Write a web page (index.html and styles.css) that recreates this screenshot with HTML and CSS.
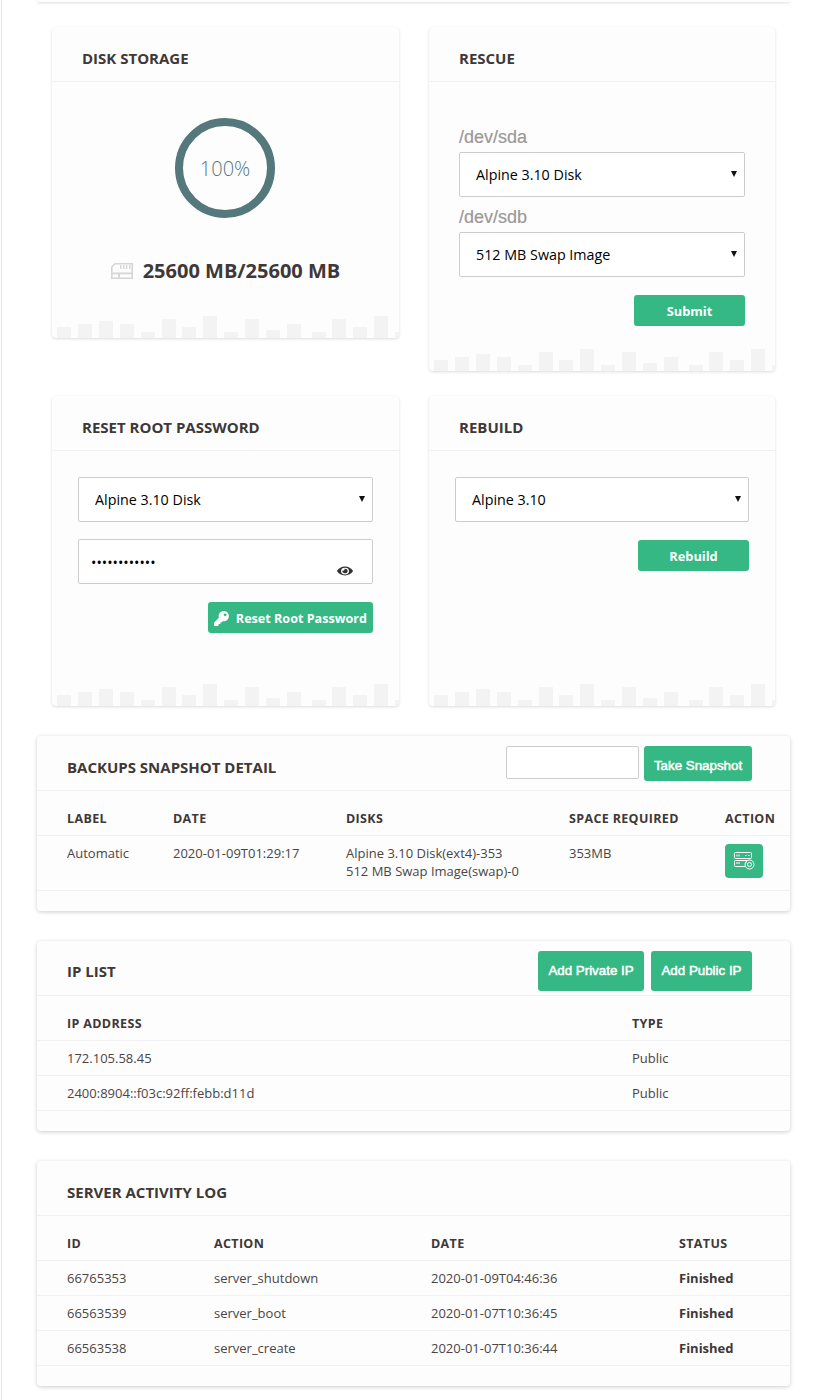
FILE: index.html
```html
<!DOCTYPE html>
<html lang="en">
<head>
    <meta charset="UTF-8">
    <meta name="viewport" content="width=device-width, initial-scale=1.0">
    <title>Server detail</title>
    <link rel="stylesheet" href="styles.css">
</head>
<body>
    <svg class="sprite" width="0" height="0" aria-hidden="true">
        <symbol id="bars" viewBox="0 0 347 22">
            <rect x="5" y="11" width="14" height="11"/>
            <rect x="26" y="8" width="14" height="14"/>
            <rect x="47" y="5" width="14" height="17"/>
            <rect x="68" y="8" width="14" height="14"/>
            <rect x="89" y="16" width="14" height="6"/>
            <rect x="110" y="3" width="14" height="19"/>
            <rect x="130" y="11" width="14" height="11"/>
            <rect x="151" y="0" width="14" height="22"/>
            <rect x="172" y="16" width="14" height="6"/>
            <rect x="193" y="3" width="14" height="19"/>
            <rect x="214" y="14" width="14" height="8"/>
            <rect x="235" y="8" width="14" height="14"/>
            <rect x="260" y="16" width="14" height="6"/>
            <rect x="280" y="3" width="14" height="19"/>
            <rect x="301" y="11" width="14" height="11"/>
            <rect x="322" y="0" width="14" height="22"/>
            <rect x="343" y="16" width="14" height="6"/>
        </symbol>
    </svg>

    <div class="page">
        <div class="card-stub"></div>

        <div class="panel-grid">
            <div class="card panel panel-disk">
                <div class="card-header"><h2>Disk Storage</h2></div>
                <div class="disk-body">
                    <div class="ring">100%</div>
                    <div class="disk-usage">
                        <svg class="ram-icon" width="22" height="16" viewBox="0 0 22 16">
                            <path d="M4 .8h17.2v14.4H.8V4z" fill="none" stroke="#d6d6d6" stroke-width="1.6"/>
                            <path d="M1 9.5h20v1.8H9v3.5H7v-3.5H1z" fill="#d6d6d6"/>
                            <path d="M9 2h1.4v4H9zM12 2h1.4v4H12zM15 2h1.4v4H15zM18 2h1.4v4H18z" fill="#d6d6d6"/>
                        </svg>
                        <span>25600 MB/25600 MB</span>
                    </div>
                </div>
                <svg class="bars"><use href="#bars"/></svg>
            </div>

            <div class="card panel panel-rescue">
                <div class="card-header"><h2>Rescue</h2></div>
                <form class="rescue-form">
                    <label class="dev-label">/dev/sda</label>
                    <select class="field"><option>Alpine 3.10 Disk</option></select>
                    <label class="dev-label">/dev/sdb</label>
                    <select class="field"><option>512 MB Swap Image</option></select>
                    <div class="form-actions">
                        <button type="button" class="btn btn-wide">Submit</button>
                    </div>
                </form>
                <svg class="bars"><use href="#bars"/></svg>
            </div>

            <div class="card panel panel-tall">
                <div class="card-header"><h2>Reset Root Password</h2></div>
                <form class="stack-form">
                    <select class="field"><option>Alpine 3.10 Disk</option></select>
                    <div class="password-wrap">
                        <input class="field" type="password" value="abcdefghijkl">
                        <svg class="eye-icon" width="16" height="12" viewBox="0 0 576 512" preserveAspectRatio="none">
                            <path d="M572.52 241.4C518.29 135.59 410.93 64 288 64S57.68 135.64 3.48 241.41a32.35 32.35 0 0 0 0 29.19C57.71 376.41 165.07 448 288 448s230.32-71.64 284.52-177.41a32.35 32.35 0 0 0 0-29.19zM288 400a144 144 0 1 1 144-144 143.93 143.93 0 0 1-144 144zm0-240a95.31 95.31 0 0 0-25.31 3.79 47.85 47.85 0 0 1-66.9 66.9A95.78 95.78 0 1 0 288 160z"/>
                        </svg>
                    </div>
                    <div class="form-actions">
                        <button type="button" class="btn btn-icon">
                            <svg width="15" height="15" viewBox="0 0 512 512">
                                <path d="M512 176.001C512 273.203 433.202 352 336 352c-11.22 0-22.19-1.062-32.827-3.069l-24.012 27.014A23.999 23.999 0 0 1 261.223 384H224v40c0 13.255-10.745 24-24 24h-40v40c0 13.255-10.745 24-24 24H24c-13.255 0-24-10.745-24-24v-78.059c0-6.365 2.529-12.47 7.029-16.971l161.802-161.802C163.108 213.814 160 195.271 160 176 160 78.798 238.797.001 335.999 0 433.488-.001 512 78.511 512 176.001zM336 128c0 26.51 21.49 48 48 48s48-21.49 48-48-21.49-48-48-48-48 21.49-48 48z"/>
                            </svg>
                            Reset Root Password
                        </button>
                    </div>
                </form>
                <svg class="bars"><use href="#bars"/></svg>
            </div>

            <div class="card panel panel-tall">
                <div class="card-header"><h2>Rebuild</h2></div>
                <form class="stack-form">
                    <select class="field"><option>Alpine 3.10</option></select>
                    <div class="form-actions">
                        <button type="button" class="btn btn-wide">Rebuild</button>
                    </div>
                </form>
                <svg class="bars"><use href="#bars"/></svg>
            </div>
        </div>

        <div class="card table-card">
            <div class="card-header header-tools">
                <h2>Backups Snapshot Detail</h2>
                <div class="tools">
                    <input class="snapshot-input" type="text">
                    <button type="button" class="btn-plain btn-snapshot">Take Snapshot</button>
                </div>
            </div>
            <table class="data-table backups-table">
                <thead>
                    <tr><th>Label</th><th>Date</th><th>Disks</th><th>Space Required</th><th>Action</th></tr>
                </thead>
                <tbody>
                    <tr>
                        <td>Automatic</td>
                        <td>2020-01-09T01:29:17</td>
                        <td>Alpine 3.10 Disk(ext4)-353<br>512 MB Swap Image(swap)-0</td>
                        <td>353MB</td>
                        <td>
                            <button type="button" class="btn-restore" aria-label="Restore">
                                <svg width="21" height="18" viewBox="0 0 21 18" fill="none" stroke="#fff" stroke-width="1">
                                    <rect x=".5" y=".5" width="17" height="6" rx="1"/>
                                    <path d="M11 14.5H1.5a1 1 0 0 1-1-1v-4a1 1 0 0 1 1-1H14"/>
                                    <path d="M3 2.5v2M5 2.5v2M3 10v2M5 10v2M11 3.5h1.5M14 3.5h1.5M11 10.5h1.5"/>
                                    <circle cx="15.5" cy="12.5" r="4.5"/>
                                    <circle cx="15.5" cy="12.5" r="2"/>
                                </svg>
                            </button>
                        </td>
                    </tr>
                </tbody>
            </table>
        </div>

        <div class="card table-card">
            <div class="card-header header-tools">
                <h2>IP List</h2>
                <div class="tools">
                    <button type="button" class="btn-plain btn-ip btn-private">Add Private IP</button>
                    <button type="button" class="btn-plain btn-ip btn-public">Add Public IP</button>
                </div>
            </div>
            <table class="data-table ip-table">
                <thead>
                    <tr><th>IP Address</th><th>Type</th></tr>
                </thead>
                <tbody>
                    <tr><td>172.105.58.45</td><td>Public</td></tr>
                    <tr><td>2400:8904::f03c:92ff:febb:d11d</td><td>Public</td></tr>
                </tbody>
            </table>
        </div>

        <div class="card table-card">
            <div class="card-header"><h2>Server Activity Log</h2></div>
            <table class="data-table log-table">
                <thead>
                    <tr><th>ID</th><th>Action</th><th>Date</th><th>Status</th></tr>
                </thead>
                <tbody>
                    <tr><td>66765353</td><td>server_shutdown</td><td>2020-01-09T04:46:36</td><td class="status">Finished</td></tr>
                    <tr><td>66563539</td><td>server_boot</td><td>2020-01-07T10:36:45</td><td class="status">Finished</td></tr>
                    <tr><td>66563538</td><td>server_create</td><td>2020-01-07T10:36:44</td><td class="status">Finished</td></tr>
                </tbody>
            </table>
        </div>
    </div>
</body>
</html>
```

FILE: styles.css
```css
* { box-sizing: border-box; }

body {
    margin: 0;
    background: #fff;
    color: #3e3838;
    font-family: "Open Sans", sans-serif;
    font-size: 13px;
}

.sprite {
    position: absolute;
}

.page {
    width: 823px;
    height: 1400px;
    margin-left: 1px;
    padding: 0 34px 0 35px;
    border-left: 1px solid #e3e5ea;
    overflow: hidden;
}

.card-stub {
    height: 2px;
    background: #fdfdfd;
    border-radius: 0 0 4px 4px;
    box-shadow: 0 1px 3px rgba(0,0,0,0.16);
}

.card {
    position: relative;
    background: #fdfdfd;
    border-radius: 4px;
    box-shadow: 0 1px 3px rgba(0,0,0,0.14);
}

.card-header {
    height: 55px;
    padding: 0 30px;
    display: flex;
    align-items: center;
    border-bottom: 1px solid #f1f1f3;
}

.card-header h2 {
    margin: 0;
    padding-top: 7px;
    font-size: 15px;
    font-weight: 700;
    text-transform: uppercase;
    color: #3e3838;
}

.panel-grid {
    display: grid;
    grid-template-columns: 347px 346px;
    column-gap: 30px;
    row-gap: 25px;
    align-items: start;
    margin: 25px 15px 30px;
}

.panel {
    overflow: hidden;
}

.panel-disk { height: 311px; }
.panel-rescue { height: 344px; }
.panel-tall { height: 310px; }

.bars {
    position: absolute;
    left: 0;
    bottom: 0;
    width: 347px;
    height: 22px;
    fill: #f3f3f3;
}

/* disk */
.disk-body {
    display: flex;
    flex-direction: column;
    align-items: center;
    padding-top: 36px;
}

.ring {
    width: 100px;
    height: 100px;
    margin-right: 1px;
    border: 8px solid #54787c;
    border-radius: 50%;
    display: flex;
    align-items: center;
    justify-content: center;
    font-size: 20px;
    font-weight: 300;
    color: #55787e;
}

.disk-usage {
    display: flex;
    align-items: center;
    gap: 10px;
    margin-top: 39px;
    font-size: 20px;
    font-weight: 700;
    color: #3e3838;
}

/* forms */
.field {
    display: block;
    width: 100%;
    height: 45px;
    padding: 1px 12px 0;
    background: #fff;
    border: 1px solid #ccc;
    border-radius: 2px;
    font-family: "Open Sans", sans-serif;
    font-size: 14.3px;
    color: #000;
}

select.field {
    appearance: none;
    padding-top: 0;
    padding-left: 16px;
    background: #fff url("data:image/svg+xml,%3Csvg xmlns='http://www.w3.org/2000/svg' width='6' height='6'%3E%3Cpath d='M0 0h6L3 6z' fill='%23111'/%3E%3C/svg%3E") no-repeat right 7px top 18px;
}

.rescue-form {
    padding: 43px 30px 0;
}

.dev-label {
    display: block;
    height: 27px;
    font-family: "Liberation Sans", sans-serif;
    font-size: 18px;
    line-height: 24px;
    color: #9c9898;
    -webkit-text-stroke: 0.2px #9c9898;
}

.rescue-form select + .dev-label {
    margin-top: 8px;
}

.form-actions {
    display: flex;
    justify-content: flex-end;
    margin-top: 18px;
}

.stack-form {
    display: flex;
    flex-direction: column;
    padding: 26px 26px 0;
}

.password-wrap {
    position: relative;
    margin-top: 17px;
}

.eye-icon {
    position: absolute;
    right: 20px;
    bottom: 7px;
    fill: #333;
}

.btn {
    height: 31px;
    padding: 0 6px;
    display: inline-flex;
    align-items: center;
    justify-content: center;
    gap: 7px;
    background: #36b884;
    border: none;
    border-radius: 3px;
    font-family: "Open Sans", sans-serif;
    font-size: 12.8px;
    font-weight: 700;
    white-space: nowrap;
    color: #fff;
}

.btn-wide { width: 111px; }

.btn-icon {
    width: 165px;
    padding-top: 1px;
    justify-content: flex-start;
    font-size: 12.6px;
}

.btn-icon svg { fill: #fff; }

.btn-plain {
    background: #36b884;
    border: none;
    border-radius: 3px;
    padding: 0;
    font-family: "Liberation Sans", sans-serif;
    font-size: 13.33px;
    -webkit-text-stroke: 0.5px #fff;
    color: #fff;
}

/* table cards */
.table-card {
    margin-bottom: 30px;
    padding-bottom: 20px;
    box-shadow: 0 1px 4px rgba(0,0,0,0.2);
}

.header-tools {
    justify-content: space-between;
    padding-right: 38px;
}

.tools {
    display: flex;
    align-items: flex-start;
    align-self: flex-start;
    margin-top: 10px;
}

.snapshot-input {
    width: 133px;
    height: 33px;
    background: #fff;
    border: 1px solid #ccc;
    border-radius: 2px;
}

.btn-snapshot {
    width: 108px;
    height: 35px;
    margin-left: 5px;
    padding-top: 3px;
}

.btn-ip { height: 40px; }
.btn-private { width: 106px; }
.btn-public { width: 101px; margin-left: 7px; }

.data-table {
    width: 100%;
    table-layout: fixed;
    border-collapse: collapse;
}

.data-table th {
    height: 44px;
    padding: 12px 0 0 30px;
    text-align: left;
    font-size: 12.5px;
    font-weight: 700;
    letter-spacing: 0.35px;
    text-transform: uppercase;
    border-bottom: 1px solid #f1f1f3;
}

.ip-table th { height: 45px; }

.data-table td {
    height: 35px;
    padding: 0 0 0 30px;
    color: #4a4545;
    border-bottom: 1px solid #f1f1f3;
}

.backups-table td {
    height: 55px;
    padding-top: 8px;
    vertical-align: top;
    line-height: 18px;
}

.backups-table th:nth-child(1) { width: 106px; }
.backups-table th:nth-child(2) { width: 173px; }
.backups-table th:nth-child(3) { width: 223px; }
.backups-table th:nth-child(4) { width: 156px; }

.ip-table th:nth-child(1) { width: 565px; }

.log-table th:nth-child(1) { width: 147px; }
.log-table th:nth-child(2) { width: 217px; }
.log-table th:nth-child(3) { width: 248px; }

.data-table td.status {
    font-weight: 700;
    color: #3e3838;
}

.btn-restore {
    width: 38px;
    height: 34px;
    padding: 0;
    display: flex;
    align-items: center;
    justify-content: center;
    background: #36b884;
    border: none;
    border-radius: 4px;
}
```
